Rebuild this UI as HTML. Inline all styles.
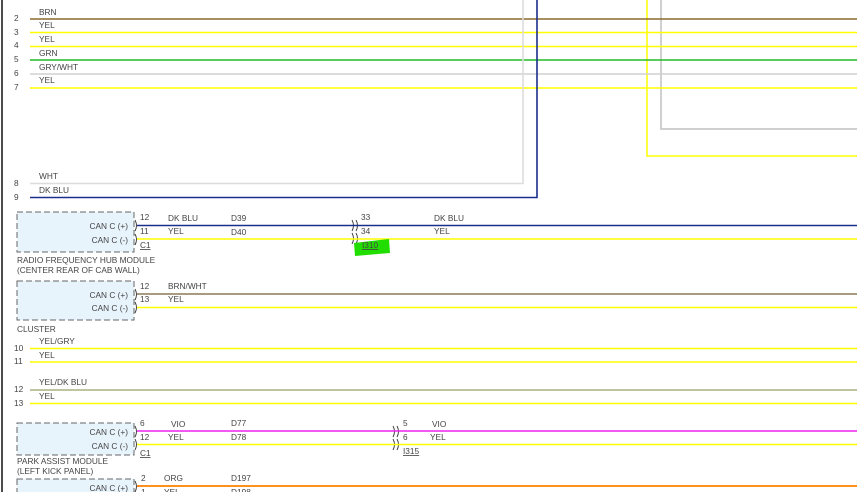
<!DOCTYPE html>
<html><head><meta charset="utf-8"><style>
html,body{margin:0;padding:0;background:#fff;width:857px;height:492px;overflow:hidden}
svg{display:block}
text{font-family:"Liberation Sans",sans-serif;font-size:8.3px;fill:#444}
</style></head><body>
<svg width="857" height="492" viewBox="0 0 857 492">
<line x1="2" y1="0" x2="2" y2="492" stroke="#111" stroke-width="1.5"/>
<polyline points="647,0 647,156 857,156" fill="none" stroke="#ffff00" stroke-width="1.5"/>
<polyline points="661,0 661,129 857,129" fill="none" stroke="#c0c0c0" stroke-width="1.5"/>
<line x1="30" y1="19" x2="857" y2="19" stroke="#8a6a2a" stroke-width="1.5"/>
<line x1="30" y1="32.5" x2="857" y2="32.5" stroke="#ffff00" stroke-width="1.6"/>
<line x1="30" y1="46.5" x2="857" y2="46.5" stroke="#ffff00" stroke-width="1.6"/>
<line x1="30" y1="60" x2="857" y2="60" stroke="#22bb22" stroke-width="1.5"/>
<line x1="30" y1="74" x2="857" y2="74" stroke="#d0d0d0" stroke-width="1.6"/>
<line x1="30" y1="88" x2="857" y2="88" stroke="#ffff00" stroke-width="1.6"/>
<polyline points="30,183.5 523,183.5 523,0" fill="none" stroke="#dcdcdc" stroke-width="1.6"/>
<polyline points="30,197.5 537,197.5 537,0" fill="none" stroke="#1a2f8a" stroke-width="1.6"/>
<text x="39" y="15">BRN</text><text x="14" y="21">2</text>
<text x="39" y="28">YEL</text><text x="14" y="35">3</text>
<text x="39" y="42">YEL</text><text x="14" y="48">4</text>
<text x="39" y="56">GRN</text><text x="14" y="62">5</text>
<text x="39" y="70">GRY/WHT</text><text x="14" y="76">6</text>
<text x="39" y="83">YEL</text><text x="14" y="90">7</text>
<text x="39" y="179">WHT</text><text x="14" y="186">8</text>
<text x="39" y="193">DK BLU</text><text x="14" y="200">9</text>

<g fill="none" stroke="#333" stroke-width="0.9">
<path d="M135,220 q3,5.5 0,11 M135,234 q3,5.5 0,11"/>
<path d="M135,289 q3,5.5 0,11 M135,302 q3,5.5 0,11"/>
<path d="M135,426 q3,5.5 0,11 M135,439 q3,5.5 0,11"/>
<path d="M135,481 q3,5.5 0,11"/>
<path d="M352,220 q3,5.5 0,11 M356,220 q3,5.5 0,11 M352,233 q3,5.5 0,11 M356,233 q3,5.5 0,11"/>
<path d="M393,426 q3,5.5 0,11 M397,426 q3,5.5 0,11 M393,439 q3,5.5 0,11 M397,439 q3,5.5 0,11"/>
</g>

<rect x="17" y="212" width="117" height="40" fill="#e8f4fc" stroke="#666" stroke-dasharray="6,3"/>
<text x="128" y="229" text-anchor="end">CAN C (+)</text>
<text x="128" y="243" text-anchor="end">CAN C (-)</text>
<line x1="137" y1="225.5" x2="857" y2="225.5" stroke="#1a2f8a" stroke-width="1.6"/>
<line x1="137" y1="239" x2="857" y2="239" stroke="#ffff00" stroke-width="1.6"/>
<text x="140" y="220">12</text><text x="140" y="234">11</text>
<text x="140" y="248" text-decoration="underline">C1</text>
<text x="168" y="221">DK BLU</text><text x="231" y="221">D39</text>
<text x="168" y="234">YEL</text><text x="231" y="235">D40</text>
<polygon points="354,243 389,239 390,253 355,256" fill="#22dd00"/>
<text x="361" y="220">33</text><text x="361" y="234">34</text>
<text x="362" y="248" text-decoration="underline">I310</text>
<text x="434" y="221">DK BLU</text><text x="434" y="234">YEL</text>
<text x="17" y="263">RADIO FREQUENCY HUB MODULE</text>
<text x="17" y="273">(CENTER REAR OF CAB WALL)</text>

<rect x="17" y="281" width="117" height="39" fill="#e8f4fc" stroke="#666" stroke-dasharray="6,3"/>
<text x="128" y="298" text-anchor="end">CAN C (+)</text>
<text x="128" y="311" text-anchor="end">CAN C (-)</text>
<line x1="137" y1="294" x2="857" y2="294" stroke="#8a7a5a" stroke-width="1.4"/>
<line x1="137" y1="307.5" x2="857" y2="307.5" stroke="#ffff00" stroke-width="1.6"/>
<text x="140" y="289">12</text><text x="140" y="302">13</text>
<text x="168" y="289">BRN/WHT</text><text x="168" y="302">YEL</text>
<text x="17" y="332">CLUSTER</text>

<line x1="30" y1="348.5" x2="857" y2="348.5" stroke="#ffff00" stroke-width="1.6"/>
<line x1="30" y1="362" x2="857" y2="362" stroke="#ffff00" stroke-width="1.6"/>
<text x="39" y="344">YEL/GRY</text><text x="14" y="351">10</text>
<text x="39" y="358">YEL</text><text x="14" y="364">11</text>
<line x1="30" y1="390" x2="857" y2="390" stroke="#aab080" stroke-width="1.6"/>
<line x1="30" y1="403.5" x2="857" y2="403.5" stroke="#ffff00" stroke-width="1.6"/>
<text x="39" y="385">YEL/DK BLU</text><text x="14" y="392">12</text>
<text x="39" y="399">YEL</text><text x="14" y="406">13</text>

<rect x="17" y="423" width="117" height="32" fill="#e8f4fc" stroke="#666" stroke-dasharray="6,3"/>
<text x="128" y="435" text-anchor="end">CAN C (+)</text>
<text x="128" y="449" text-anchor="end">CAN C (-)</text>
<line x1="137" y1="431" x2="857" y2="431" stroke="#ee22ee" stroke-width="1.6"/>
<line x1="137" y1="444.5" x2="857" y2="444.5" stroke="#ffff00" stroke-width="1.6"/>
<text x="140" y="426">6</text><text x="140" y="440">12</text>
<text x="140" y="456" text-decoration="underline">C1</text>
<text x="171" y="427">VIO</text><text x="231" y="426">D77</text>
<text x="168" y="440">YEL</text><text x="231" y="440">D78</text>
<text x="403" y="426">5</text><text x="403" y="440">6</text>
<text x="403" y="454" text-decoration="underline">I315</text>
<text x="432" y="427">VIO</text><text x="430" y="440">YEL</text>
<text x="17" y="464">PARK ASSIST MODULE</text>
<text x="17" y="474">(LEFT KICK PANEL)</text>

<rect x="17" y="479" width="117" height="30" fill="#e8f4fc" stroke="#666" stroke-dasharray="6,3"/>
<text x="128" y="491" text-anchor="end">CAN C (+)</text>
<line x1="137" y1="486" x2="857" y2="486" stroke="#ff8000" stroke-width="1.8"/>
<text x="141" y="481">2</text><text x="164" y="481">ORG</text><text x="231" y="481">D197</text>
<text x="141" y="495">1</text><text x="164" y="495">YEL</text><text x="231" y="495">D198</text>
</svg>
</body></html>
